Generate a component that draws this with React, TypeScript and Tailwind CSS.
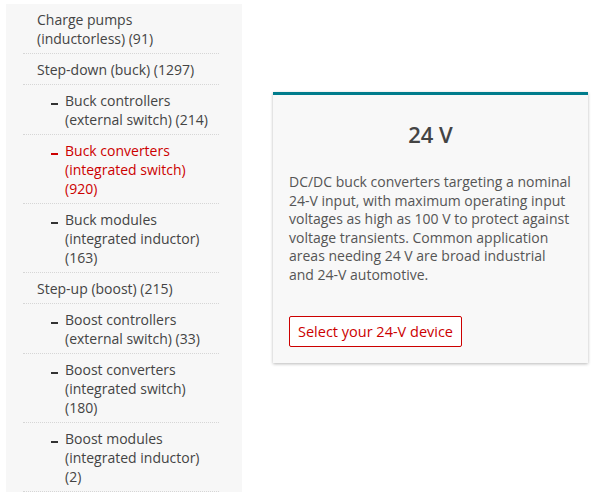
import React from 'react'

type NavItem = {
  label: string[]
  sub?: boolean
  active?: boolean
}

const items: NavItem[] = [
  { label: ['Charge pumps', '(inductorless) (91)'] },
  { label: ['Step-down (buck) (1297)'] },
  { label: ['Buck controllers', '(external switch) (214)'], sub: true },
  { label: ['Buck converters', '(integrated switch)', '(920)'], sub: true, active: true },
  { label: ['Buck modules', '(integrated inductor)', '(163)'], sub: true },
  { label: ['Step-up (boost) (215)'] },
  { label: ['Boost controllers', '(external switch) (33)'], sub: true },
  { label: ['Boost converters', '(integrated switch)', '(180)'], sub: true },
  { label: ['Boost modules', '(integrated inductor)', '(2)'], sub: true },
]

function SideItem({ item }: { item: NavItem }) {
  const color = item.active ? 'text-[#cc0000]' : 'text-[#444444]'
  return (
    <li className="mx-[17px] border-b border-dotted border-[#d6d6d6] pt-[6px] pb-[5px]">
      <div className={`flex ${item.sub ? 'pl-[28px]' : 'pl-[14px]'} ${color}`}>
        {item.sub && (
          <span className="w-[14px] shrink-0 relative">
            <span
              className={`absolute left-0 top-[12px] w-[7px] h-[1.5px] ${
                item.active ? 'bg-[#cc0000]' : 'bg-[#333333]'
              }`}
            />
          </span>
        )}
        <div>
          {item.label.map((line) => (
            <div key={line} className="leading-[19px]">
              {line}
            </div>
          ))}
        </div>
      </div>
    </li>
  )
}

export default function App() {
  return (
    <div
      className="flex w-[598px] h-[497px] bg-white text-[14px]"
      style={{ fontFamily: '"Open Sans", "Noto Sans", sans-serif' }}
    >
      <aside className="ml-[6px] mt-[4px] w-[236px] self-start bg-[#f7f7f7] pr-[6px]">
        <ul>
          {items.map((item) => (
            <SideItem key={item.label.join(' ')} item={item} />
          ))}
        </ul>
      </aside>

      <div className="ml-[31px] mt-[92px] w-[315px] self-start">
        <div className="border-t-[3px] border-[#007c8c] bg-[#f8f8f8] px-[16px] pt-[24px] pb-[16px] shadow-[0_1px_3px_rgba(0,0,0,0.28)]">
          <h2 className="text-center text-[22px] leading-[30px] font-semibold text-[#444444]">
            24 V
          </h2>
          <p className="mt-[24px] leading-[18.6px] text-[#555555]">
            DC/DC buck converters targeting a nominal 24-V input, with maximum operating input
            voltages as high as 100 V to protect against voltage transients. Common application
            areas needing 24 V are broad industrial and 24-V automotive.
          </p>
          <button
            type="button"
            className="mt-[31px] rounded-[2px] border border-[#cc0000] bg-white px-[8px] h-[31px] text-[14.5px] leading-[29px] text-[#cc0000]"
          >
            Select your 24-V device
          </button>
        </div>
      </div>
    </div>
  )
}
